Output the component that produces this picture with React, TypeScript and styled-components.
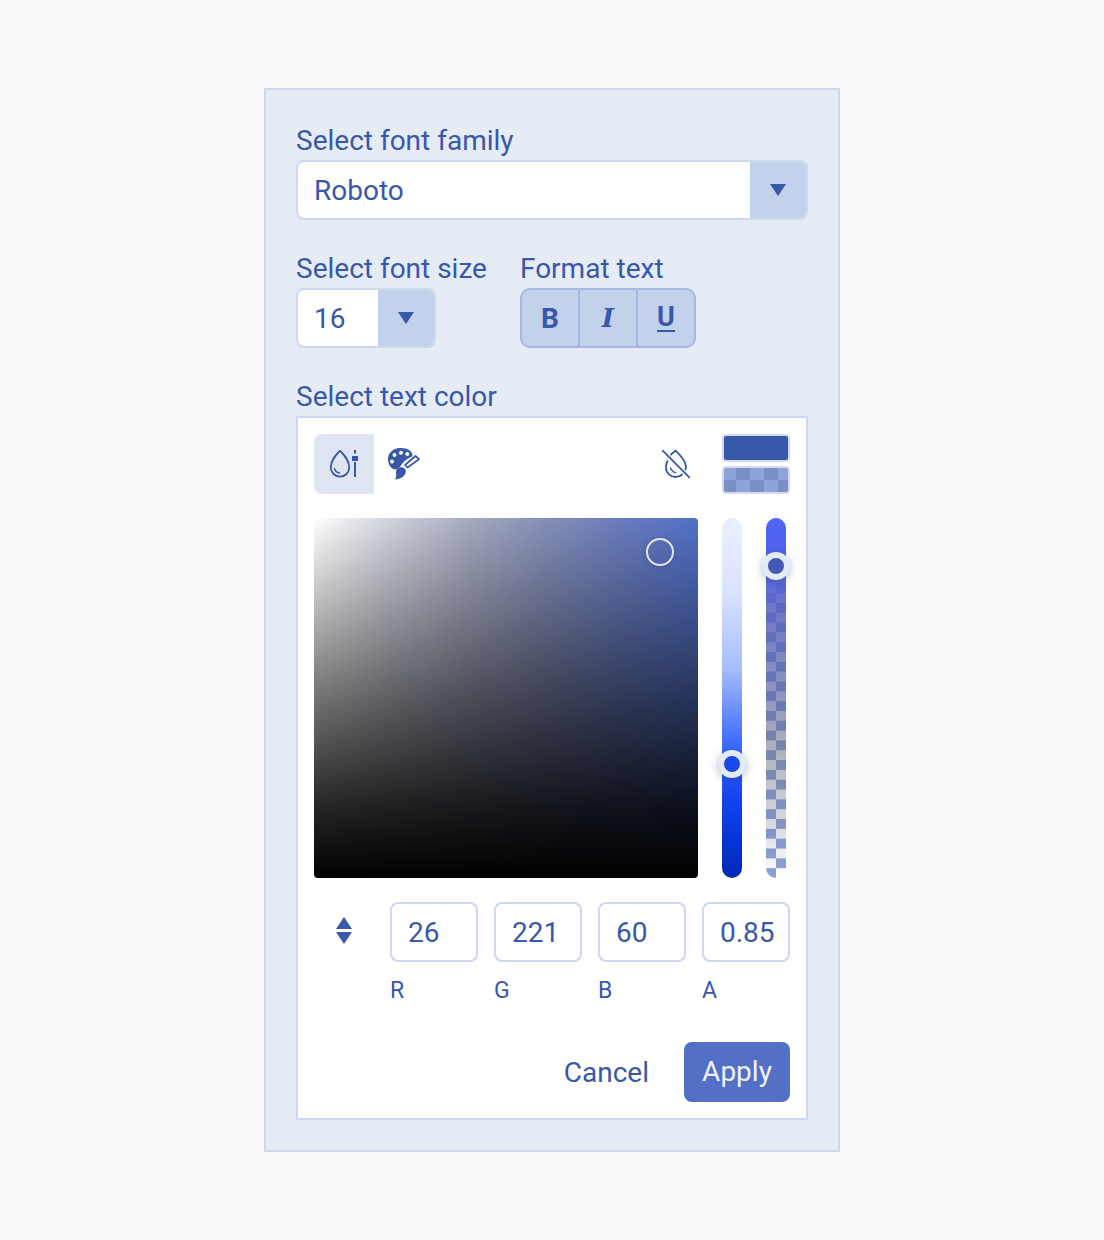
import styled, { createGlobalStyle } from 'styled-components';

const INK = '#3957ab';
const LINE = '#cfd9ee';

const GlobalStyle = createGlobalStyle`
  html, body {
    margin: 0;
    background: #f9fafc;
    font-family: Roboto, "Liberation Sans", sans-serif;
    color: ${INK};
  }
`;

const Page = styled.div`
  box-sizing: border-box;
  height: 1240px;
  padding-top: 88px;
  display: flex;
  justify-content: center;
  align-items: flex-start;
`;

const Panel = styled.div`
  box-sizing: border-box;
  width: 576px;
  height: 1064px;
  padding: 34px 30px 30px;
  background: #e5ecf6;
  border: 2px solid ${LINE};
  display: flex;
  flex-direction: column;
  gap: 32px;
`;

const Field = styled.div`
  display: flex;
  flex-direction: column;
`;

const Label = styled.div`
  font-size: 28px;
  line-height: 34px;
  margin-bottom: 2px;
  white-space: nowrap;
`;

const Row = styled.div`
  display: flex;
  gap: 33px;
`;

const Select = styled.div<{ $width: number }>`
  box-sizing: border-box;
  width: ${(p) => p.$width}px;
  height: 60px;
  display: flex;
  background: #fff;
  border: 2px solid ${LINE};
  border-radius: 8px;
  overflow: hidden;
`;

const SelectValue = styled.div`
  flex: 1;
  padding-left: 16px;
  font-size: 28px;
  line-height: 58px;
`;

const SelectButton = styled.div`
  width: 56px;
  background: #c3d2eb;
  display: flex;
  align-items: center;
  justify-content: center;
`;

const Arrow = styled.span<{ $up?: boolean }>`
  display: block;
  width: 0;
  height: 0;
  border-left: 8px solid transparent;
  border-right: 8px solid transparent;
  ${(p) => (p.$up ? `border-bottom: 12px solid ${INK};` : `border-top: 12px solid ${INK};`)}
`;

const FormatGroup = styled.div`
  box-sizing: border-box;
  width: 176px;
  height: 60px;
  display: flex;
  background: #c3d2eb;
  border: 2px solid #a5b8df;
  border-radius: 10px;
  overflow: hidden;
`;

const FormatButton = styled.div<{ $serif?: boolean }>`
  flex: 1;
  display: flex;
  align-items: center;
  justify-content: center;
  font-size: 28px;
  font-weight: 700;
  & + & {
    border-left: 2px solid #a5b8df;
  }
  ${(p) => p.$serif && `font-family: "DejaVu Serif", serif; font-style: italic; font-size: 26px; font-weight: 700;`}
`;

const Underlined = styled.span`
  display: block;
  line-height: 24px;
  border-bottom: 2px solid ${INK};
  font-size: 27px;
  height: 25px;
`;

const ColorBox = styled.div`
  box-sizing: border-box;
  height: 704px;
  padding: 16px;
  background: #fff;
  border: 2px solid ${LINE};
  display: flex;
  flex-direction: column;
`;

const Toolbar = styled.div`
  display: flex;
  height: 60px;
`;

const ToolButton = styled.div<{ $active?: boolean }>`
  width: 60px;
  height: 60px;
  display: flex;
  align-items: center;
  justify-content: center;
  border-radius: 8px 0 0 8px;
  background: ${(p) => (p.$active ? '#dfe5f3' : 'transparent')};
`;

const Spacer = styled.div`
  flex: 1;
`;

const Swatches = styled.div`
  margin-left: 16px;
  width: 68px;
  display: flex;
  flex-direction: column;
  gap: 4px;
`;

const Swatch = styled.div<{ $checked?: boolean }>`
  box-sizing: border-box;
  height: 28px;
  border: 2px solid #d3dcef;
  border-radius: 4px;
  background: ${INK};
  ${(p) =>
    p.$checked &&
    `background: conic-gradient(#7a8fc8 25%, #8ca3dc 0 50%, #7a8fc8 0 75%, #8ca3dc 0) -2px 0 / 28px 24px;`}
`;

const Picker = styled.div`
  margin-top: 24px;
  display: flex;
  height: 360px;
`;

const Saturation = styled.div`
  position: relative;
  width: 384px;
  height: 360px;
  border-radius: 4px;
  background:
    linear-gradient(to bottom, rgba(0, 0, 0, 0), rgba(0, 0, 0, 0.55) 50%, rgba(0, 0, 0, 0.85) 80%, #000),
    linear-gradient(to right, #fff, #d0d2dc 20%, #a6abc0 40%, #868fb8 60%, #6a7cbe 80%, #5270c8);
`;

const SaturationHandle = styled.div`
  position: absolute;
  left: 332px;
  top: 20px;
  box-sizing: border-box;
  width: 28px;
  height: 28px;
  border: 2px solid #e2e5ee;
  border-radius: 50%;
  box-shadow: 0 1px 4px rgba(20, 30, 60, 0.2);
`;

const Track = styled.div<{ $left: number }>`
  position: relative;
  width: 20px;
  height: 360px;
  margin-left: ${(p) => p.$left}px;
  border-radius: 10px;
`;

const HueTrack = styled(Track)`
  background: linear-gradient(
    to bottom,
    #ebf0fd 0%,
    #dbe4fd 20%,
    #a6bcff 42%,
    #3f6dff 62%,
    #1544f0 78%,
    #0434d8 90%,
    #0428b0 100%
  );
`;

const AlphaTrack = styled(Track)`
  background:
    linear-gradient(
      to bottom,
      #4f63f2 0%,
      #4f63ee 12%,
      rgba(85, 95, 190, 0.85) 25%,
      rgba(88, 100, 162, 0.68) 50%,
      rgba(100, 105, 130, 0.52) 64%,
      rgba(100, 105, 130, 0.25) 85%,
      rgba(255, 255, 255, 0) 100%
    ),
    conic-gradient(#8ea2d8 25%, #fff 0 50%, #8ea2d8 0 75%, #fff 0) 0 100% / 20px 19.66px;
`;

const Thumb = styled.div<{ $top: number; $color: string }>`
  position: absolute;
  left: -4px;
  top: ${(p) => p.$top}px;
  box-sizing: border-box;
  width: 28px;
  height: 28px;
  border: 6px solid #e4eaf8;
  border-radius: 50%;
  background: ${(p) => p.$color};
  box-shadow: 0 2px 8px rgba(30, 40, 80, 0.3);
`;

const Values = styled.div`
  margin-top: 24px;
  display: flex;
  gap: 16px;
`;

const Toggle = styled.div`
  box-sizing: border-box;
  width: 60px;
  height: 60px;
  padding-bottom: 4px;
  display: flex;
  flex-direction: column;
  align-items: center;
  justify-content: center;
  gap: 3px;
`;

const ValueField = styled.div`
  width: 88px;
  display: flex;
  flex-direction: column;
`;

const ValueInput = styled.div`
  box-sizing: border-box;
  height: 60px;
  padding-left: 16px;
  border: 2px solid ${LINE};
  border-radius: 8px;
  font-size: 28px;
  line-height: 58px;
`;

const ValueLabel = styled.div`
  margin-top: 15px;
  font-size: 23px;
  line-height: 28px;
`;

const Actions = styled.div`
  margin-top: auto;
  display: flex;
  justify-content: flex-end;
  align-items: center;
  gap: 19px;
`;

const TextButton = styled.div`
  height: 60px;
  padding: 0 16px;
  font-size: 28px;
  line-height: 62px;
`;

const PrimaryButton = styled.div`
  width: 106px;
  height: 60px;
  border-radius: 8px;
  background: #5470c6;
  color: #eef2fc;
  font-size: 28px;
  line-height: 60px;
  text-align: center;
`;

const DropSliderIcon = () => (
  <svg width="30" height="30" viewBox="0 0 30 30" fill="none">
    <path
      d="M11 1.8 C7 6 1.8 11 1.8 18.5 A9.2 9.2 0 0 0 20.2 18.5 C20.2 11 15 6 11 1.8 Z"
      stroke={INK}
      strokeWidth="1.8"
      strokeLinejoin="round"
    />
    <path d="M5.5 19.5 C6.2 22 8 23.6 10.5 24" stroke={INK} strokeWidth="1.4" strokeLinecap="round" />
    <rect x="25" y="1" width="2" height="3.5" fill={INK} />
    <rect x="23" y="7" width="6" height="5" fill={INK} />
    <rect x="25" y="13" width="2" height="15" fill={INK} />
  </svg>
);

const PaletteIcon = () => (
  <svg width="34" height="34" viewBox="0 0 34 34">
    <path
      fill={INK}
      fillRule="evenodd"
      d="M13 1 C20 0.5 25 4 25.5 7.5 C25.7 9 24.5 10 23 10.5 C19.5 12 16 15 14 18.5 C12.5 20.5 10.5 22 8 22.5 C3.5 21.5 1 17 1 12 C1 6 6 1.5 13 1 Z
         M7.5 6 a2 2 0 1 0 0.01 0 Z M14 3.8 a2 2 0 1 0 0.01 0 Z M20.3 5 a2 2 0 1 0 0.01 0 Z M5 12.4 a2 2 0 1 0 0.01 0 Z"
    />
    <path
      fill={INK}
      d="M10.5 21.5 C12.5 19.5 17 20 18.5 22.5 C19.5 24.5 18.5 28 15.5 30 C13.5 31.5 10.5 32.5 8 32.5 C9.8 30 9 27 9 25 C9 23.5 9.5 22.5 10.5 21.5 Z"
    />
    <path
      fill="none"
      stroke={INK}
      strokeWidth="1.7"
      strokeLinejoin="round"
      d="M20.5 20.5 L18 18 L28.5 9 L32 12.2 Z"
    />
  </svg>
);

const NoDropIcon = () => (
  <svg width="30" height="30" viewBox="0 0 30 30" fill="none" stroke={INK} strokeWidth="1.8" strokeLinecap="round">
    <path d="M10 5.5 C11.5 4 13 2.8 14.7 1.7 C18 5 24.5 11 25 17.5 C25 18.5 24.8 19.5 24.5 20.5" />
    <path d="M6.5 12 C5.5 14 5 16 5 18.5 C5 24 9.5 28 14.5 28 C17 28 19.5 27 21 25.5" />
    <path d="M9.5 19 C10.5 21.5 12 23 14.5 23.7" strokeWidth="1.4" />
    <path d="M1.7 1.7 L28.3 28.3" />
  </svg>
);

export default function App() {
  return (
    <>
      <GlobalStyle />
      <Page>
        <Panel>
          <Field>
            <Label>Select font family</Label>
            <Select $width={512}>
              <SelectValue>Roboto</SelectValue>
              <SelectButton>
                <Arrow />
              </SelectButton>
            </Select>
          </Field>

          <Row>
            <Field>
              <Label>Select font size</Label>
              <Select $width={140}>
                <SelectValue>16</SelectValue>
                <SelectButton>
                  <Arrow />
                </SelectButton>
              </Select>
            </Field>
            <Field>
              <Label>Format text</Label>
              <FormatGroup>
                <FormatButton>B</FormatButton>
                <FormatButton $serif>I</FormatButton>
                <FormatButton>
                  <Underlined>U</Underlined>
                </FormatButton>
              </FormatGroup>
            </Field>
          </Row>

          <Field>
            <Label>Select text color</Label>
            <ColorBox>
              <Toolbar>
                <ToolButton $active>
                  <DropSliderIcon />
                </ToolButton>
                <ToolButton>
                  <PaletteIcon />
                </ToolButton>
                <Spacer />
                <ToolButton>
                  <NoDropIcon />
                </ToolButton>
                <Swatches>
                  <Swatch />
                  <Swatch $checked />
                </Swatches>
              </Toolbar>

              <Picker>
                <Saturation>
                  <SaturationHandle />
                </Saturation>
                <HueTrack $left={24}>
                  <Thumb $top={232} $color="#1a48e8" />
                </HueTrack>
                <AlphaTrack $left={24}>
                  <Thumb $top={34} $color="#4458b5" />
                </AlphaTrack>
              </Picker>

              <Values>
                <Toggle>
                  <Arrow $up />
                  <Arrow />
                </Toggle>
                {[
                  ['26', 'R'],
                  ['221', 'G'],
                  ['60', 'B'],
                  ['0.85', 'A'],
                ].map(([value, name]) => (
                  <ValueField key={name}>
                    <ValueInput>{value}</ValueInput>
                    <ValueLabel>{name}</ValueLabel>
                  </ValueField>
                ))}
              </Values>

              <Actions>
                <TextButton>Cancel</TextButton>
                <PrimaryButton>Apply</PrimaryButton>
              </Actions>
            </ColorBox>
          </Field>
        </Panel>
      </Page>
    </>
  );
}
